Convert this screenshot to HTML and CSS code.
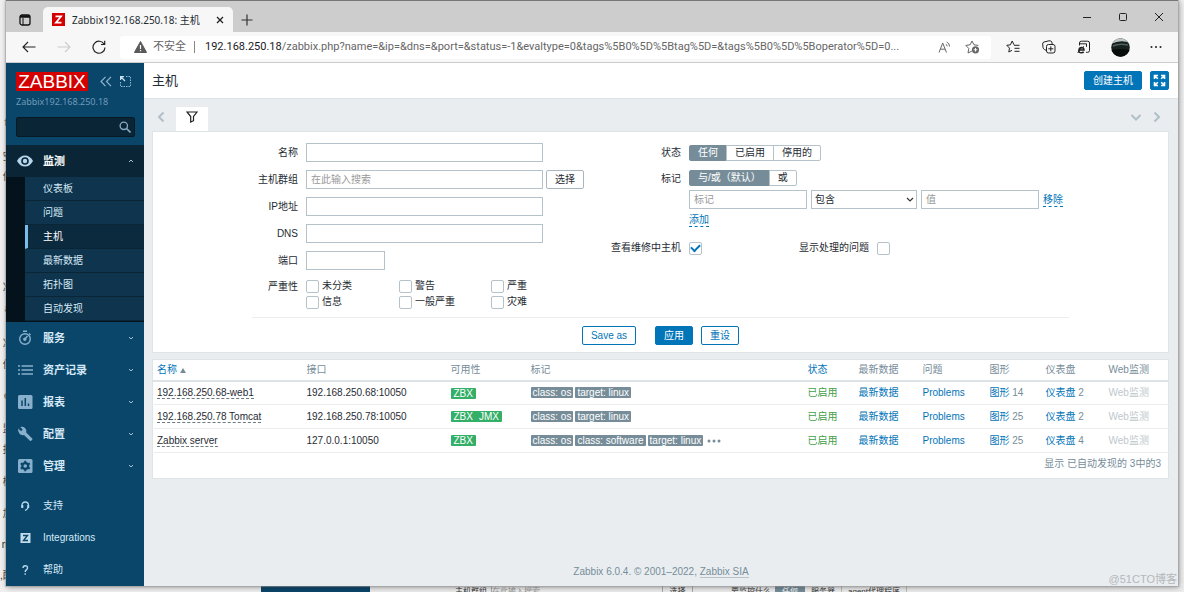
FILE: index.html
```html
<!DOCTYPE html>
<html lang="zh-CN">
<head>
<meta charset="utf-8">
<title>Zabbix192.168.250.18: 主机</title>
<link rel="stylesheet" href="styles.css">
</head>
<body>
<div class="desktop" aria-hidden="true">
  <div class="behind-left">
    <span>ta</span><span>空</span><span>件</span><span>u</span><span>准</span><span>at</span><span>准</span><span>便</span><span>er</span><span>监</span><span>报</span><span>检</span><span>加</span><span>no</span><span>,配</span>
  </div>
  <div class="behind-bottom">
    <span class="behind-menu"></span>
    <span class="behind-label">主机群组</span>
    <span class="behind-input">在此输入搜索</span>
    <span class="behind-select">选择</span>
    <span class="behind-watch">要监控什么</span>
    <span class="behind-on">任何</span>
    <span class="behind-opt">服务器</span>
    <span class="behind-opt">agent代理程序</span>
  </div>
</div>
<div class="window">
  <div class="titlebar">
    <button class="tab-actions" aria-label="标签页操作"><svg width="12" height="12" viewBox="0 0 12 12" fill="none" stroke="#111"><rect x="1" y="1" width="10" height="10" rx="2" stroke-width="1.3"/><path d="M1 2.5h10" stroke-width="2.5"/><path d="M4 4v7"/></svg></button>
    <div class="tab">
      <span class="favicon"><svg width="13" height="13" viewBox="0 0 13 13"><rect width="13" height="13" fill="#d40000"/><path d="M3.5 3.3h5.600L3.900 9.700h5.600" fill="none" stroke="#fff" stroke-width="1.7"/></svg></span>
      <span class="tab-title">Zabbix192.168.250.18: 主机</span>
      <button aria-label="关闭标签页"><svg width="8" height="8" viewBox="0 0 8 8" stroke="#222" stroke-width="1.3"><path d="M1 1l6 6M7 1L1 7"/></svg></button>
    </div>
    <button class="new-tab" aria-label="新建标签页"><svg width="12" height="12" viewBox="0 0 12 12" stroke="#333" stroke-width="1.2"><path d="M6 .5v11M.5 6h11"/></svg></button>
    <div class="window-controls">
      <button aria-label="最小化"><svg width="10" height="10" viewBox="0 0 10 10" stroke="#222"><path d="M1 5.5h8"/></svg></button>
      <button aria-label="最大化"><svg width="10" height="10" viewBox="0 0 10 10" fill="none" stroke="#222"><rect x="1.5" y="1.5" width="7" height="7" rx="1"/></svg></button>
      <button aria-label="关闭"><svg width="10" height="10" viewBox="0 0 10 10" stroke="#222"><path d="M1 1l8 8M9 1L1 9"/></svg></button>
    </div>
  </div>
  <div class="toolbar">
    <div class="nav-buttons">
      <button aria-label="后退"><svg width="14" height="12" viewBox="0 0 14 12" fill="none" stroke="#222" stroke-width="1.1"><path d="M13.5 6H1M6 1L1 6l5 5"/></svg></button>
      <button aria-label="前进"><svg width="14" height="12" viewBox="0 0 14 12" fill="none" stroke="#ccc" stroke-width="1.1"><path d="M.5 6H13M8 1l5 5-5 5"/></svg></button>
      <button aria-label="刷新"><svg width="14" height="14" viewBox="0 0 14 14" fill="none" stroke="#222" stroke-width="1.2"><path d="M12.2 4.2A6 6 0 1 0 13 7.5M12.7.8v3.7H9"/></svg></button>
    </div>
    <div class="address">
      <svg width="13" height="12" viewBox="0 0 13 12"><path d="M6.5.5L12.6 11.5H.4z" fill="#5a5a5a" stroke="#5a5a5a" stroke-linejoin="round"/><path d="M6.5 4v4M6.5 9v1.2" stroke="#fff" stroke-width="1.2"/></svg>
      <span class="insecure">不安全</span>
      <span class="url"><b>192.168.250.18</b>/zabbix.php?name=&amp;ip=&amp;dns=&amp;port=&amp;status=-1&amp;evaltype=0&amp;tags%5B0%5D%5Btag%5D=&amp;tags%5B0%5D%5Boperator%5D=0...</span>
      <button aria-label="大声朗读"><svg width="13" height="13" viewBox="0 0 13 13" fill="none" stroke="#666"><path d="M1 11.5L4.7 2l3.8 9.5M2.3 8.2h4.9M8 3.2q1 .8 1 2M8.7 1q2.8 1.2 2.8 4.5"/></svg></button>
      <button aria-label="收藏"><svg width="15" height="14" viewBox="0 0 15 14" fill="none" stroke="#666"><path d="M7 11L3 13l.8-4.5L.8 5.4l4.3-.6L7 1l2 3.8 4.3.6"/><circle cx="10.5" cy="9.8" r="3.6" fill="#666" stroke="none"/><path d="M10.5 8v3.6M8.7 9.8h3.6" stroke="#fff"/></svg></button>
    </div>
    <div class="browser-tools">
      <button aria-label="收藏夹"><svg width="14" height="14" viewBox="0 0 14 14" fill="none" stroke="#222"><path d="M8 4.8L6.2 1 4.4 4.8.8 5.3l2.7 2.8L2.8 12 6 10.3M8 5.3h5.5M8.5 8.3h5M8.5 11.3h5"/></svg></button>
      <button aria-label="集锦"><svg width="14" height="14" viewBox="0 0 14 14" fill="none" stroke="#222"><rect x="4.5" y="4.5" width="8.5" height="8.5" rx="2"/><path d="M8.8 6.3v5M6.3 8.8h5M4.5 10.5L2.6 9.6Q1.3 9 1 7.5L.7 4Q.6 2.4 2 2L7 .8Q9 .4 9.8 2l.4 2"/></svg></button>
      <button aria-label="Internet Explorer 模式"><svg width="14" height="14" viewBox="0 0 14 14" fill="none" stroke="#222"><path d="M2.5 5.500V3Q2.5 1.2 4.300 1.2h6.400q1.8 0 1.8 1.8v7.5q0 1.8-1.8 1.8H9M2.500 3.8h7v3"/><path d="M2 10h5Q6.800 7.500 4.500 7.500T1.900 10.200t2.600 2.600q1.500 0 2.200-1" stroke-width="1.500"/><path d="M.8 13Q2 8.500 7 6.500"/></svg></button>
      <button aria-label="个人资料"><svg width="19" height="19" viewBox="0 0 19 19"><defs><clipPath id="avatar"><circle cx="9.5" cy="9.5" r="9.3"/></clipPath></defs><g clip-path="url(#avatar)"><rect width="19" height="19" fill="#172020"/><path d="M0 0h19v5Q10 1 0 6z" fill="#bcc5c4"/><path d="M2 8q6-3 15-1" stroke="#50605e" fill="none" stroke-width="1.5"/><path d="M0 12q8-2 19 0v7H0z" fill="#080d0c"/></g></svg></button>
      <button aria-label="设置及其他"><svg width="12" height="4" viewBox="0 0 12 4" fill="#222"><circle cx="1.5" cy="2" r="1"/><circle cx="6" cy="2" r="1"/><circle cx="10.5" cy="2" r="1"/></svg></button>
    </div>
  </div>

  <div class="page">
    <aside class="sidebar">
      <div class="brand">
        <a class="logo" href="#">ZABBIX</a>
        <button class="collapse" aria-label="折叠侧边栏"><svg width="12" height="11" viewBox="0 0 12 11" fill="none" stroke="#8fb4cf" stroke-width="1.2"><path d="M5.5.8L1 5.5l4.5 4.700M11 .8L6.5 5.5l4.5 4.700"/></svg></button>
        <button aria-label="隐藏侧边栏"><svg width="11" height="11" viewBox="0 0 11 11" fill="none" stroke="#8fb4cf"><path d="M6 .5h4.5v10H.5V6" stroke-dasharray="1.5 1"/><path d="M.5 4V.5H4M.8.8L5 5" stroke="#c8e0f0" stroke-width="1.3"/></svg></button>
      </div>
      <div class="server-name">Zabbix192.168.250.18</div>
      <form class="search"><input type="text" aria-label="搜索"><button type="button" aria-label="搜索"><svg width="12" height="12" viewBox="0 0 12 12" fill="none" stroke="#86aac4"><circle cx="4.8" cy="4.8" r="3.7" stroke-width="1.3"/><path d="M7.5 7.5l4 4" stroke-width="1.6"/></svg></button></form>
      <nav class="menu">
        <a class="item open" href="#"><svg width="18" height="14" viewBox="0 0 18 14"><path d="M1 7Q4 1.5 9 1.5T17 7q-3 5.5-8 5.500T1 7z" fill="#b5d6ec"/><circle cx="9" cy="7" r="3.8" fill="#0a2636"/><circle cx="9" cy="7" r="2.2" fill="#b5d6ec"/></svg><span>监测</span><svg class="arrow" width="6" height="6" viewBox="0 0 6 6"><path d="M1 4l2-2 2 2"/></svg></a>
        <div class="submenu">
          <a href="#">仪表板</a><a href="#">问题</a><a href="#" class="current">主机</a><a href="#">最新数据</a><a href="#">拓扑图</a><a href="#">自动发现</a>
        </div>
        <a class="item" href="#"><svg width="18" height="16" viewBox="0 0 18 16" fill="none" stroke="#88b0cc" stroke-width="1.4"><circle cx="9" cy="9" r="5.3"/><path d="M7 1.2h4M9 9l2.5-3M13 3.5l1.5 1.5"/><circle cx="8.8" cy="9.2" r="1" fill="#88b0cc"/></svg><span>服务</span><svg class="arrow" width="6" height="6" viewBox="0 0 6 6"><path d="M1 2l2 2 2-2"/></svg></a>
        <a class="item" href="#"><svg width="18" height="14" viewBox="0 0 18 14" stroke="#88b0cc" stroke-width="1.5"><path d="M2 3h2M5.5 3H17M2 7h2M5.5 7H17M2 11h2M5.5 11H17"/></svg><span>资产记录</span><svg class="arrow" width="6" height="6" viewBox="0 0 6 6"><path d="M1 2l2 2 2-2"/></svg></a>
        <a class="item" href="#"><svg width="18" height="16" viewBox="0 0 18 16"><rect x="2" y="1" width="14.5" height="14" rx="1.5" fill="#88b0cc"/><path d="M6 6.5v5.5M9.3 4v8M12.5 9.5V12" stroke="#0a466a" stroke-width="1.5"/></svg><span>报表</span><svg class="arrow" width="6" height="6" viewBox="0 0 6 6"><path d="M1 2l2 2 2-2"/></svg></a>
        <a class="item" href="#"><svg width="18" height="16" viewBox="0 0 18 16"><path d="M2.3 2.6L5 5.2 6.7 3.5 4.2 1Q7 .2 9 2t1.2 4.500l6 6q.6.6 0 1.200l-1.100 1.100q-.6.5-1.200 0L8 9Q5.5 9.8 3.5 7.8T2.3 2.6z" fill="#88b0cc"/></svg><span>配置</span><svg class="arrow" width="6" height="6" viewBox="0 0 6 6"><path d="M1 2l2 2 2-2"/></svg></a>
        <a class="item" href="#"><svg width="18" height="16" viewBox="0 0 18 16"><rect x="2" y="1" width="14.5" height="14" rx="1.5" fill="#88b0cc"/><circle cx="9.25" cy="8" r="4" fill="#0a466a"/><path d="M9.25 2.8v10.4M4.7 5.4l9.1 5.2M13.8 5.4l-9.1 5.2" stroke="#0a466a" stroke-width="2"/><circle cx="9.25" cy="8" r="1.8" fill="#88b0cc"/></svg><span>管理</span><svg class="arrow" width="6" height="6" viewBox="0 0 6 6"><path d="M1 2l2 2 2-2"/></svg></a>
      </nav>
      <nav class="menu support">
        <a class="item" href="#"><svg width="18" height="12" viewBox="0 0 18 12" fill="none" stroke="#b5d6ec" stroke-width="1.3"><path d="M6 7.5V5.5Q6 2 9.2 2t3.300 3.500Q12.5 9 9 10.5"/><path d="M6.3 5v3M12.2 5v3" stroke-width="2"/></svg><span>支持</span></a>
        <a class="item" href="#"><svg width="18" height="12" viewBox="0 0 18 12"><rect x="4.5" y="1" width="10" height="10" fill="#c3dcec"/><path d="M7 3.500h4.500L7.500 8.500H12" fill="none" stroke="#0a466a" stroke-width="1.4"/></svg><span>Integrations</span></a>
        <a class="item" href="#"><svg width="18" height="12" viewBox="0 0 18 12" fill="none" stroke="#b5d6ec" stroke-width="1.4"><path d="M7 4q0-2.300 2.300-2.300T11.500 4q0 1-1.200 1.900T9.200 8M9.200 9.300v1.500"/></svg><span>帮助</span></a>
      </nav>
    </aside>

    <main class="content">
      <header class="page-header">
        <h1>主机</h1>
        <button class="btn primary">创建主机</button>
        <button class="btn primary kiosk" aria-label="全屏"><svg width="13" height="13" viewBox="0 0 13 13" fill="none" stroke="#fff" stroke-width="1.6"><path d="M1.5 5V1.500H5M8 1.500h3.500V5M11.500 8v3.500H8M5 11.500H1.500V8M1.500 1.500l3.300 3.300M11.500 1.500L8.200 4.800M11.500 11.500L8.200 8.200M1.500 11.500l3.300-3.300"/></svg></button>
      </header>
      <div class="filter-tabs">
        <button aria-label="上一个"><svg width="8" height="12" viewBox="0 0 8 12"><path d="M6.5 1.5L2 6l4.5 4.5"/></svg></button>
        <button class="active-tab" aria-label="过滤器"><svg width="12" height="12" viewBox="0 0 12 12"><path d="M1 1h10L7.500 5.500v4.200L4.700 11V5.500z"/></svg></button>
        <span class="spacer"></span>
        <button aria-label="列表"><svg width="12" height="12" viewBox="0 0 12 12"><path d="M1.5 4L6 8.500 10.500 4"/></svg></button>
        <button aria-label="下一个"><svg width="8" height="12" viewBox="0 0 8 12"><path d="M1.5 1.5L6 6l-4.500 4.500"/></svg></button>
      </div>
      <form class="filter">
        <div class="filter-columns">
          <div class="fields">
            <label for="f-name">名称</label><input class="text" id="f-name" type="text">
            <label for="f-group">主机群组</label><div class="line"><input class="text" id="f-group" type="text" placeholder="在此输入搜索"><button type="button" class="btn plain">选择</button></div>
            <label for="f-ip">IP地址</label><input class="text" id="f-ip" type="text">
            <label for="f-dns">DNS</label><input class="text" id="f-dns" type="text">
            <label for="f-port">端口</label><input class="text port" id="f-port" type="text">
            <span class="label top">严重性</span>
            <div class="severities">
              <label><input type="checkbox">未分类</label><label><input type="checkbox">警告</label><label><input type="checkbox">严重</label>
              <label><input type="checkbox">信息</label><label><input type="checkbox">一般严重</label><label><input type="checkbox">灾难</label>
            </div>
          </div>
          <div class="fields right">
            <span class="label">状态</span>
            <div class="segments">
              <input type="radio" name="status" id="s-any" checked><label for="s-any">任何</label><input type="radio" name="status" id="s-on"><label for="s-on">已启用</label><input type="radio" name="status" id="s-off"><label for="s-off">停用的</label>
            </div>
            <span class="label top">标记</span>
            <div class="tag-filter">
              <div class="segments">
                <input type="radio" name="eval" id="e-and" checked><label for="e-and">与/或（默认）</label><input type="radio" name="eval" id="e-or"><label for="e-or">或</label>
              </div>
              <div class="tag-row">
                <input class="text" type="text" placeholder="标记" aria-label="标记">
                <span class="select"><select aria-label="运算符"><option>包含</option></select><svg width="8" height="6" viewBox="0 0 8 6" fill="none" stroke="#333" stroke-width="1.2"><path d="M1 1l3 3 3-3"/></svg></span>
                <input class="text" type="text" placeholder="值" aria-label="值">
                <a class="dotted" href="#">移除</a>
              </div>
              <a class="dotted" href="#">添加</a>
            </div>
            <label for="f-maint">查看维修中主机</label>
            <div class="line checks"><input type="checkbox" id="f-maint" checked><label for="f-sup">显示处理的问题</label><input type="checkbox" id="f-sup"></div>
          </div>
        </div>
        <div class="filter-buttons">
          <button type="button" class="btn outline save">Save as</button>
          <button type="button" class="btn primary">应用</button>
          <button type="button" class="btn outline">重设</button>
        </div>
      </form>
      <table class="hosts">
        <colgroup><col class="c-name"><col class="c-if"><col class="c-av"><col><col class="c-st"><col class="c-data"><col class="c-prob"><col class="c-graph"><col class="c-dash"><col class="c-web"></colgroup>
        <thead><tr><th><a href="#">名称</a> <svg width="6" height="6" viewBox="0 0 6 6"><path d="M0 6l3-5 3 5z" fill="#768d99"/></svg></th><th>接口</th><th>可用性</th><th>标记</th><th><a href="#">状态</a></th><th>最新数据</th><th>问题</th><th>图形</th><th>仪表盘</th><th>Web监测</th></tr></thead>
        <tbody>
          <tr><td><a class="host" href="#">192.168.250.68-web1</a></td><td>192.168.250.68:10050</td><td><span class="avail"><span>ZBX</span></span></td><td><div class="tags"><span>class: os</span><span>target: linux</span></div></td><td><a class="enabled" href="#">已启用</a></td><td><a href="#">最新数据</a></td><td><a href="#">Problems</a></td><td><a href="#">图形</a> <small>14</small></td><td><a href="#">仪表盘</a> <small>2</small></td><td class="off">Web监测</td></tr>
          <tr><td><a class="host" href="#">192.168.250.78 Tomcat</a></td><td>192.168.250.78:10050</td><td><span class="avail"><span>ZBX</span><span>JMX</span></span></td><td><div class="tags"><span>class: os</span><span>target: linux</span></div></td><td><a class="enabled" href="#">已启用</a></td><td><a href="#">最新数据</a></td><td><a href="#">Problems</a></td><td><a href="#">图形</a> <small>25</small></td><td><a href="#">仪表盘</a> <small>2</small></td><td class="off">Web监测</td></tr>
          <tr><td><a class="host" href="#">Zabbix server</a></td><td>127.0.0.1:10050</td><td><span class="avail"><span>ZBX</span></span></td><td><div class="tags"><span>class: os</span><span>class: software</span><span>target: linux</span><button aria-label="更多标记"><svg width="14" height="4" viewBox="0 0 14 4" fill="#768d99"><circle cx="2" cy="2" r="1.5"/><circle cx="7" cy="2" r="1.5"/><circle cx="12" cy="2" r="1.5"/></svg></button></div></td><td><a class="enabled" href="#">已启用</a></td><td><a href="#">最新数据</a></td><td><a href="#">Problems</a></td><td><a href="#">图形</a> <small>25</small></td><td><a href="#">仪表盘</a> <small>4</small></td><td class="off">Web监测</td></tr>
        </tbody>
        <tfoot><tr><td colspan="10">显示 已自动发现的 3中的3</td></tr></tfoot>
      </table>
      <footer class="page-footer">Zabbix 6.0.4. © 2001–2022, <a href="#">Zabbix SIA</a></footer>
    </main>
  </div>
</div>
<div class="watermark">@51CTO博客</div>
</body>
</html>
```
FILE: styles.css
```css
* { box-sizing: border-box; }
body {
  margin: 0;
  min-height: 100vh;
  padding: 0 6px 6px;
  display: flex;
  position: relative;
  overflow: hidden;
  background: #f0f0f0;
  color: #1f2c33;
  font: 10px/14px "Liberation Sans", "Noto Sans CJK SC", sans-serif;
}
button, input, select { font: inherit; color: inherit; margin: 0; }
button { border: 0; padding: 0; background: none; display: flex; align-items: center; justify-content: center; }
a { color: #0275b8; text-decoration: none; }
svg { flex: none; display: block; }

/* Document behind the browser window */
.desktop { position: absolute; inset: 0; color: #333; overflow: hidden; }
.behind-left {
  width: 6px;
  padding-top: 116px;
  display: grid;
  grid-template-rows: 34px 20px 32px 79px 21px 35px 21px 31px 33px 21px 32px 32px 31px 31px 14px;
  justify-items: end;
}
.behind-left span { white-space: nowrap; }
.behind-bottom {
  position: absolute;
  left: 261px;
  right: 0;
  bottom: 0;
  height: 6px;
  display: flex;
  font-size: 8px;
  line-height: 12px;
  background: #ececec;
  white-space: nowrap;
}
.behind-menu { width: 109px; background: #0a466a; }
.behind-label { width: 117px; text-align: right; }
.behind-input { width: 172px; margin-left: 4px; border-left: 1px solid #aaa; border-right: 1px solid #aaa; color: #999; }
.behind-select { width: 30px; text-align: center; border-right: 1px solid #aaa; }
.behind-watch { width: 78px; text-align: right; }
.behind-on { width: 30px; margin-left: 4px; text-align: center; background: #768d99; color: #fff; }
.behind-opt { padding: 0 6px; border-right: 1px solid #bbb; }

/* Browser window */
.window {
  flex: 1;
  min-width: 0;
  display: flex;
  flex-direction: column;
  position: relative;
  background: #f7f7f7;
  border-top: 1px solid #777;
  box-shadow: 0 0 1px 1px #9998, 1px 1px 6px 0 #0006;
}
.titlebar { height: 31px; display: flex; background: #cdcdcd; padding-top: 6px; }
.tab-actions { width: 37px; height: 25px; }
.tab {
  width: 190px;
  display: flex;
  align-items: center;
  gap: 7px;
  padding: 0 9px;
  background: #f7f7f7;
  border-radius: 5px 5px 0 0;
  font-family: "Noto Sans", "Noto Sans CJK SC", sans-serif;
}
.tab-title { flex: 1; white-space: nowrap; }
.new-tab { width: 28px; }
.window-controls { margin-left: auto; display: flex; height: 20px; padding-right: 1px; }
.window-controls button { width: 36px; }
.toolbar { height: 31px; display: flex; align-items: center; border-bottom: 1px solid #ccc; background: #f7f7f7; }
.nav-buttons { width: 114px; display: flex; padding-left: 5px; }
.nav-buttons button { width: 35px; height: 24px; }
.address {
  flex: 1;
  min-width: 0;
  height: 23px;
  display: flex;
  align-items: center;
  gap: 6px;
  padding: 0 8px 0 14px;
  border-radius: 3px;
  background: #fff;
  color: #666;
  font: 11px/16px Roboto, "Noto Sans CJK SC", sans-serif;
}
.insecure { padding-right: 8px; border-right: 1px solid #888; line-height: 12px; }
.url { flex: 1; min-width: 0; margin-left: 4px; overflow: hidden; text-overflow: ellipsis; white-space: nowrap; }
.url b { font-weight: 400; color: #1a1a1a; }
.address button { width: 22px; }
.browser-tools { display: flex; width: 187px; padding: 0 4px; }
.browser-tools button { flex: 1; height: 24px; }

.page { flex: 1; display: flex; background: #e9edf0; }

/* Sidebar */
.sidebar { width: 138px; display: flex; flex-direction: column; background: #0a466a; }
.brand { display: flex; align-items: center; gap: 8px; padding: 9px 0 0 10px; }
.logo { width: 72px; height: 19px; margin-right: 4px; background: #d40000; color: #fff; font-size: 19px; line-height: 19px; text-align: center; }
.server-name { padding: 4px 10px 0; color: #6f9ab8; font-size: 9px; font-family: "Noto Sans", sans-serif; }
.search { display: flex; margin: 8px 9px 8px 10px; height: 20px; background: #0a2636; border: 1px solid #061a26; border-radius: 2px; }
.search input { flex: 1; min-width: 0; border: 0; background: none; color: #fff; }
.search button { width: 19px; }
.item { height: 32px; display: flex; align-items: center; gap: 9px; padding: 0 10px; color: #d5e9f7; font-size: 11px; font-weight: 700; }
.item.open { background: #0a2636; color: #fff; }
.arrow { margin-left: auto; fill: none; stroke: #a0c4dc; }
.submenu { padding: 0 0 1px 19px; background: #04121b; }
.submenu a { display: block; height: 24px; line-height: 23px; padding-left: 18px; background: #0f344d; border-bottom: 1px solid #0a2636; color: #d5e9f7; }
.submenu .current { background: #0b2a3d; border-left: 3px solid #78bdec; padding-left: 15px; color: #fff; }
.support { margin-top: auto; }
.support .item { font-size: 10px; font-weight: 400; }

/* Content */
.content { flex: 1; min-width: 0; display: flex; flex-direction: column; }
.page-header { height: 36px; display: flex; align-items: center; gap: 8px; padding: 0 9px 0 8px; background: #fff; border-bottom: 1px solid #dde3e7; }
h1 { flex: 1; margin: 0; font-size: 13px; font-weight: 400; line-height: 18px; }
.btn { height: 19px; padding: 0 8px; border: 1px solid #0275b8; border-radius: 2px; line-height: 14px; white-space: nowrap; }
.primary { background: #0275b8; color: #fff; }
.page-header .kiosk { width: 19px; padding: 0; }
.outline { background: #fff; color: #0275b8; }
.plain { border-color: #a9b8c0; background: #fff; }
.filter-tabs { display: flex; padding: 8px 11px 0 9px; height: 32px; }
.filter-tabs svg { fill: none; stroke: #b1bfc8; stroke-width: 2; }
.filter-tabs button { width: 21px; height: 20px; }
.filter-tabs button:first-child { width: 16px; margin-right: 7px; }
.filter-tabs .active-tab { width: 32px; height: 24px; padding-bottom: 5px; background: #fff; }
.filter-tabs .active-tab svg { stroke: #222; stroke-width: 1.2; }
.spacer { flex: 1; }
.filter { margin: 0 9px 0 8px; padding: 11px 99px 7px; background: #fff; border: 1px solid #dfe4e7; }
.filter-columns { display: flex; padding-bottom: 7px; border-bottom: 1px solid #ebeef0; }
.fields { width: 355px; display: grid; grid-template-columns: 46px 1fr; gap: 8px; align-content: start; align-items: center; }
.fields > label, .label { text-align: right; white-space: nowrap; }
.fields.right { flex: 1; width: auto; grid-template-columns: 74px 1fr; padding-top: 1px; }
.text { width: 237px; height: 19px; padding: 0 4px; border: 1px solid #b5c2ca; background: #fff; outline: 0; }
.text::placeholder { color: #999; opacity: 1; }
.port { width: 79px; }
.line { display: flex; gap: 3px; align-items: center; }
input[type="checkbox"] { appearance: none; flex: none; width: 13px; height: 13px; border: 1px solid #b5c2ca; border-radius: 2px; background: #fff; display: grid; place-items: center; }
input[type="checkbox"]:checked::after { content: ""; width: 7px; height: 4px; margin-bottom: 2px; border: solid #0275b8; border-width: 0 0 2px 2px; transform: rotate(-45deg); }
.severities { display: grid; grid-template-columns: 93px 92px 1fr; line-height: 16px; }
.severities label { display: flex; align-items: center; gap: 3px; height: 16px; white-space: nowrap; }
.top { align-self: start; padding-top: 2px; }
.segments { display: flex; position: relative; height: 16px; margin: 1px 0; }
.segments input { position: absolute; opacity: 0; width: 1px; height: 1px; }
.segments label { height: 16px; padding: 0 8px; line-height: 14px; border: 1px solid #b5c2ca; margin-right: -1px; white-space: nowrap; }
.segments input:checked + label { background: #768d99; border-color: #768d99; color: #fff; }
.segments label:first-of-type { border-radius: 2px 0 0 2px; }
.segments label:last-of-type { border-radius: 0 2px 2px 0; }
.tag-filter .segments { margin: 0 0 4px; }
.tag-row { display: flex; gap: 4px; margin-bottom: 4px; align-items: center; }
.tag-row .text { width: 118px; }
.select { position: relative; width: 106px; display: flex; }
.select select { appearance: none; width: 100%; height: 19px; padding: 0 3px; border: 1px solid #b5c2ca; border-radius: 0; background: #fff; }
.select svg { position: absolute; right: 3px; top: 7px; pointer-events: none; }
.dotted { display: inline-block; line-height: 13px; border-bottom: 1px dashed #0275b8; }
.fields > label[for="f-maint"], .checks { margin-top: 6px; }
.checks { gap: 8px; }
.checks label { margin-left: 89px; }
.filter-buttons { display: flex; justify-content: center; gap: 8px; padding-top: 8px; }
.save { margin-right: 11px; }

/* Host list */
.hosts { margin: 6px 9px 0 8px; border-collapse: collapse; table-layout: fixed; background: #fff; border: 1px solid #dfe4e7; }
.c-name { width: 150px; }
.c-if { width: 144px; }
.c-av { width: 80px; }
.c-st { width: 51px; }
.c-data { width: 64px; }
.c-prob { width: 67px; }
.c-graph { width: 56px; }
.c-dash { width: 63px; }
.c-web { width: 64px; }
th, td { padding: 0 0 0 4px; white-space: nowrap; text-align: left; }
th { height: 21px; color: #768d99; font-weight: 400; border-bottom: 2px solid #dce2e5; }
th svg { display: inline-block; }
tbody td { height: 24px; border-bottom: 1px solid #ebeef0; }
.host { color: #1f2c33; border-bottom: 1px dashed #6b7980; }
.enabled { color: #429e47; }
small { font-size: 10px; color: #768d99; }
.off { color: #c0c8cc; }
.avail { display: inline-flex; height: 11px; line-height: 11px; background: #34af67; color: #fff; border-radius: 1px; vertical-align: middle; }
.avail span { padding: 0 3px; }
.tags { display: flex; gap: 2px; align-items: center; }
.tags span { height: 11px; padding: 0 2px; line-height: 11px; background: #768d99; color: #fff; border-radius: 1px; }
.tags button { margin-left: 2px; }
tfoot td { height: 26px; padding: 0 7px 4px 0; text-align: right; color: #768d99; }
.page-footer { margin-top: auto; padding-bottom: 7px; text-align: center; color: #768d99; }
.page-footer a { color: #768d99; border-bottom: 1px solid #b9c4ca; }
.watermark { position: absolute; right: 7px; bottom: 6px; color: #b4b8ba; font-size: 11px; }
```
